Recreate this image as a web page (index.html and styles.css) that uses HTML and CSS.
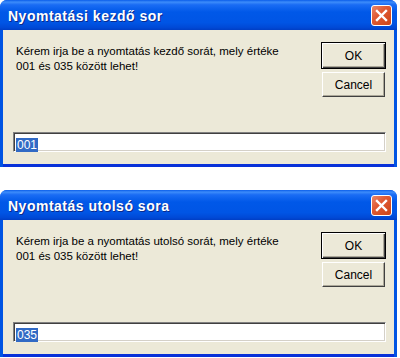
FILE: index.html
```html
<!DOCTYPE html>
<html lang="hu">
  <head>
    <meta charset="utf-8">
    <title>Nyomtatás</title>
    <link rel="stylesheet" href="styles.css">
  </head>
  <body>
    <div class="dialog">
      <div class="title-bar">
        <span class="title">Nyomtatási kezdő sor</span>
        <button class="close-button" aria-label="Bezárás">
          <svg width="13" height="13" viewBox="0 0 13 13"><path d="M2 2 L11 11 M11 2 L2 11" stroke="#fff" stroke-width="2.4" stroke-linecap="square"/></svg>
        </button>
      </div>
      <div class="dialog-body">
        <div class="dialog-row">
          <p class="message">Kérem irja be a nyomtatás kezdő sorát, mely értéke<br>001 és 035 között lehet!</p>
          <div class="dialog-actions">
            <button class="btn btn-default">OK</button>
            <button class="btn">Cancel</button>
          </div>
        </div>
        <div class="input-field"><span class="selected">001</span></div>
      </div>
    </div>

    <div class="dialog dialog-second">
      <div class="title-bar">
        <span class="title">Nyomtatás utolsó sora</span>
        <button class="close-button" aria-label="Bezárás">
          <svg width="13" height="13" viewBox="0 0 13 13"><path d="M2 2 L11 11 M11 2 L2 11" stroke="#fff" stroke-width="2.4" stroke-linecap="square"/></svg>
        </button>
      </div>
      <div class="dialog-body">
        <div class="dialog-row">
          <p class="message">Kérem irja be a nyomtatás utolsó sorát, mely értéke<br>001 és 035 között lehet!</p>
          <div class="dialog-actions">
            <button class="btn btn-default">OK</button>
            <button class="btn">Cancel</button>
          </div>
        </div>
        <div class="input-field"><span class="selected">035</span></div>
      </div>
    </div>
  </body>
</html>
```

FILE: styles.css
```css
body {
  margin: 0;
  background: #fff;
  font-family: "Liberation Sans", Arial, sans-serif;
}
.dialog {
  width: 397px;
  height: 167px;
  display: flex;
  flex-direction: column;
  box-sizing: border-box;
  border-radius: 7px 7px 0 0;
  overflow: hidden;
  background: #0054e3;
}
.dialog-second {
  margin-top: 23px;
}
.title-bar {
  height: 30px;
  flex: none;
  display: flex;
  align-items: center;
  justify-content: space-between;
  padding: 0 5px 0 8px;
  background: linear-gradient(to bottom, #0a5dea 0%, #3d8cfa 7%, #1a6cf4 16%, #0058e8 40%, #0055e5 75%, #0049d6 92%, #003ec4 100%);
}
.title {
  color: #fff;
  font-size: 14px;
  font-weight: bold;
  letter-spacing: 0.5px;
  text-shadow: 1px 1px 0 #0a2a8c;
  margin-top: 1px;
}
.close-button {
  width: 21px;
  height: 21px;
  padding: 0;
  margin-top: 1px;
  border: 1px solid #fff;
  border-radius: 3px;
  background: linear-gradient(to bottom right, #e9876a 0%, #e05a33 40%, #cc4417 100%);
  display: flex;
  align-items: center;
  justify-content: center;
}
.dialog-body {
  flex: 1;
  display: flex;
  flex-direction: column;
  justify-content: space-between;
  margin: 0 3px 3px 3px;
  padding: 12px 8px 12px 10px;
  background: #ece9d8;
  box-shadow: 0 3px 0 #0831d9;
}
.dialog-row {
  display: flex;
  justify-content: space-between;
}
.message {
  margin: 2px 0 0 3px;
  font-size: 11.5px;
  line-height: 15px;
  color: #000;
}
.dialog-actions {
  width: 65px;
  display: flex;
  flex-direction: column;
  align-items: center;
  gap: 3px;
}
.btn {
  width: 63px;
  height: 25px;
  padding: 0;
  font-family: "Liberation Sans", Arial, sans-serif;
  font-size: 12px;
  color: #000;
  background: #ece9d8;
  border: 1px solid;
  border-color: #fff #404040 #404040 #fff;
  box-shadow: inset -1px -1px 0 #aca899;
}
.btn-default {
  width: 65px;
  height: 27px;
  border: 1px solid #000;
  box-shadow: inset 1px 1px 0 #fff, inset -1px -1px 0 #404040, inset -2px -2px 0 #aca899;
}
.input-field {
  height: 20px;
  box-sizing: border-box;
  background: #fff;
  border: 1px solid;
  border-color: #808080 #fff #fff #808080;
  box-shadow: inset 1px 1px 0 #404040, inset -1px -1px 0 #d4d0c8;
  padding: 2px 0 0 2px;
}
.selected {
  display: inline-block;
  background: #316ac5;
  color: #fff;
  font-size: 12px;
  line-height: 14px;
  padding: 0 1px;
}
```
